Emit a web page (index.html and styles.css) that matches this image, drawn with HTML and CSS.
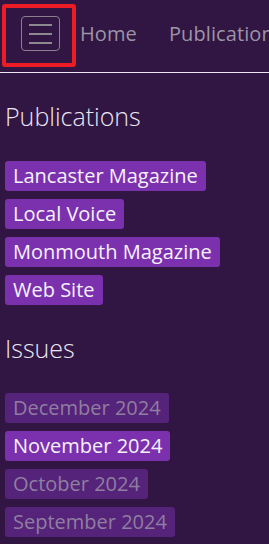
FILE: index.html
```html
<!DOCTYPE html>
<html lang="en">
<head>
<meta charset="utf-8">
<title>Publications</title>
<link rel="stylesheet" href="styles.css">
</head>
<body>
<header class="navbar">
  <div class="toggle-focus">
    <button class="toggler" aria-label="Toggle navigation">
      <svg width="23" height="20" viewBox="0 0 23 20" aria-hidden="true">
        <path d="M0 2h23M0 11h23M0 20h23" stroke="#8c8a90" stroke-width="2.2" fill="none" transform="translate(0,-1)"/>
      </svg>
    </button>
  </div>
  <nav class="nav-links">
    <a href="#">Home</a>
    <a href="#">Publications</a>
  </nav>
</header>
<main class="content">
  <section class="group">
    <h2 class="group-title">Publications</h2>
    <div class="badges">
      <a class="badge" href="#">Lancaster Magazine</a>
      <a class="badge" href="#">Local Voice</a>
      <a class="badge" href="#">Monmouth Magazine</a>
      <a class="badge" href="#">Web Site</a>
    </div>
  </section>
  <section class="group issues">
    <h2 class="group-title">Issues</h2>
    <div class="badges">
      <a class="badge dim" href="#">December 2024</a>
      <a class="badge" href="#">November 2024</a>
      <a class="badge dim" href="#">October 2024</a>
      <a class="badge dim" href="#">September 2024</a>
    </div>
  </section>
</main>
</body>
</html>
```
FILE: styles.css
```css
html, body {
  margin: 0;
  padding: 0;
  background: #311542;
  font-family: "Open Sans", "Noto Sans", sans-serif;
  color: #ece6f1;
}

.navbar {
  display: flex;
  align-items: flex-start;
  height: 72px;
  border-bottom: 1px solid #ece6f1;
  overflow: hidden;
  white-space: nowrap;
}

.toggle-focus {
  margin: 4px 0 0 2px;
  padding: 8px 12px 12px 15px;
  border: 4px solid #ed1c24;
  border-radius: 3px;
}

.toggler {
  display: flex;
  align-items: center;
  justify-content: center;
  box-sizing: border-box;
  width: 39px;
  height: 35px;
  padding: 0;
  background: transparent;
  border: 1px solid #8a8090;
  border-radius: 4px;
}

.nav-links {
  display: flex;
  gap: 32px;
  margin-left: 4px;
  height: 67px;
  align-items: center;
}

.nav-links a {
  color: #9c94a6;
  text-decoration: none;
  font-size: 20px;
  letter-spacing: 0.1px;
}

.content {
  padding: 0 0 0 5px;
}

.group-title {
  margin: 28px 0 0;
  font-weight: 300;
  font-size: 25px;
  line-height: 30px;
  color: #ece6f1;
}

.badges {
  display: flex;
  flex-direction: column;
  align-items: flex-start;
  gap: 8px;
  margin-top: 30px;
}

.badge {
  display: block;
  height: 30px;
  line-height: 30px;
  padding: 0 8px;
  border-radius: 3px;
  background: #7b31ae;
  color: #f6f1fa;
  font-size: 20px;
  text-decoration: none;
}

.badge.dim {
  background: #55237a;
  color: #8f7ea0;
}
```
